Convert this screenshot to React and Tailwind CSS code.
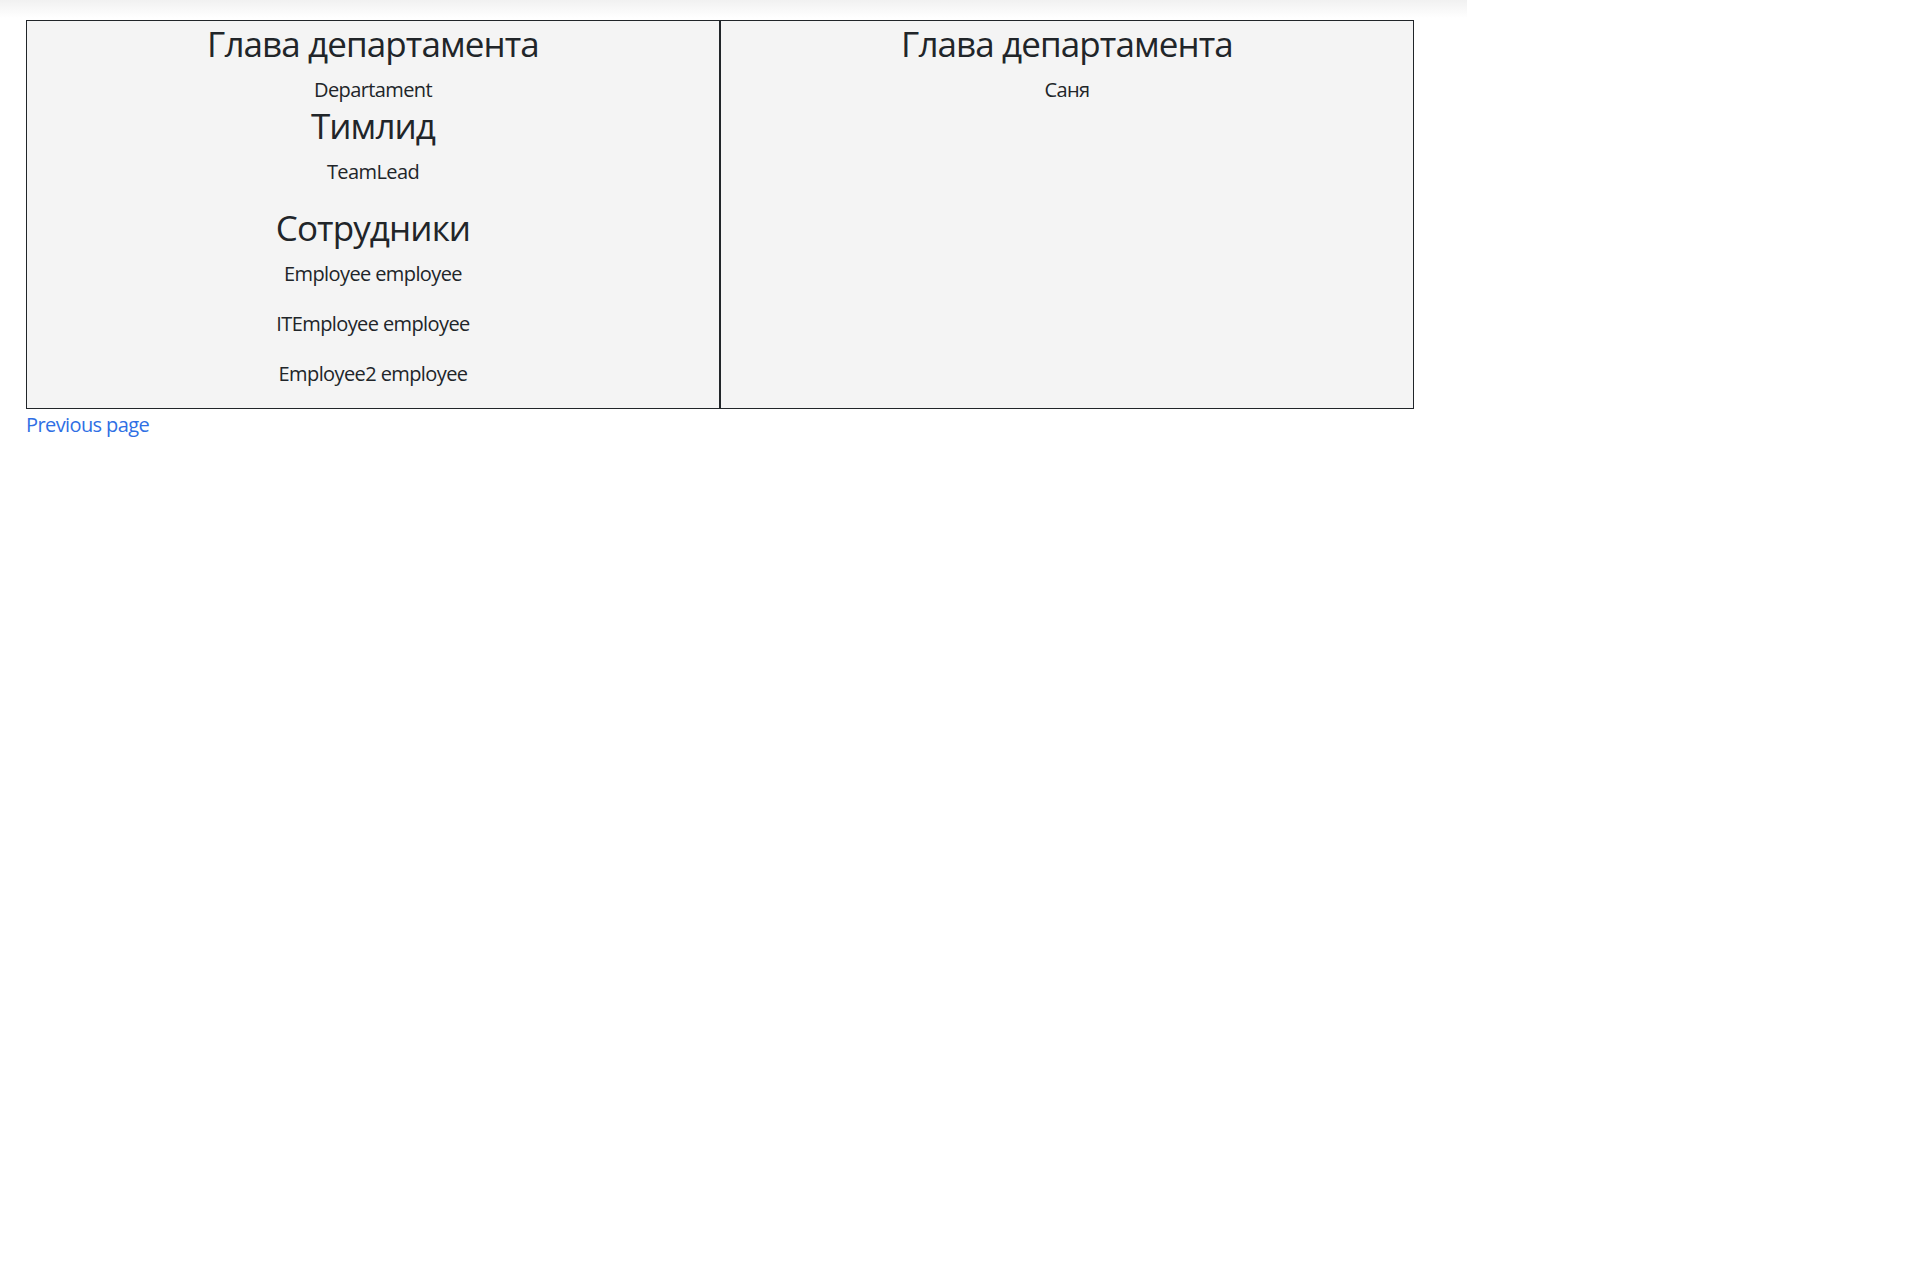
export default function App() {
  return (
    <div className="min-h-screen bg-white text-[#212529] font-['Open_Sans','Noto_Sans',sans-serif]">
      <div className="h-[18px] w-[1467px] bg-linear-to-b from-[#f1f1f1] to-white" />
      <div className="mt-[2px] ml-[26px] flex w-[1388px]">
        <div className="flex-1 border border-[#212529] bg-[#f4f4f4] pt-[2px] text-center">
          <h3 className="mb-[10px] text-[35px] leading-[42px] font-medium tracking-[-0.9px]">Глава департамента</h3>
          <div className="text-[20px] leading-[30px] tracking-[-0.6px]">Departament</div>
          <h3 className="mb-[10px] text-[35px] leading-[42px] font-medium tracking-[-0.9px]">Тимлид</h3>
          <p className="mb-[20px] text-[20px] leading-[30px] tracking-[-0.6px]">TeamLead</p>
          <h3 className="mb-[10px] text-[35px] leading-[42px] font-medium tracking-[-0.9px]">Сотрудники</h3>
          <p className="mb-[20px] text-[20px] leading-[30px] tracking-[-0.6px]">Employee employee</p>
          <p className="mb-[20px] text-[20px] leading-[30px] tracking-[-0.6px]">ITEmployee employee</p>
          <p className="mb-[19px] text-[20px] leading-[30px] tracking-[-0.6px]">Employee2 employee</p>
        </div>
        <div className="flex-1 border border-[#212529] bg-[#f4f4f4] pt-[2px] text-center">
          <h3 className="mb-[10px] text-[35px] leading-[42px] font-medium tracking-[-0.9px]">Глава департамента</h3>
          <div className="text-[20px] leading-[30px] tracking-[-0.6px]">Саня</div>
        </div>
      </div>
      <a href="#" className="mt-[1px] ml-[26px] inline-block text-[20px] leading-[30px] tracking-[-0.6px] text-[#2f6fe4]">
        Previous page
      </a>
    </div>
  );
}
